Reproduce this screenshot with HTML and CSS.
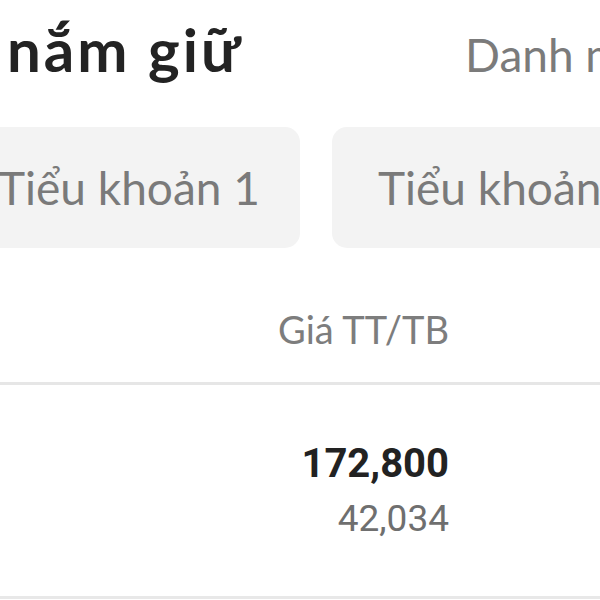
FILE: index.html
```html
<!DOCTYPE html>
<html lang="vi">
<head>
    <meta charset="UTF-8">
    <meta name="viewport" content="width=device-width, initial-scale=1.0">
    <title>Danh mục nắm giữ</title>
    <link rel="stylesheet" href="styles.css">
</head>
<body>

<div class="screen">
    <div class="top-bar">
        <h1 class="title">nắm giữ</h1>
        <span class="tab">Danh mục</span>
    </div>

    <div class="accounts">
        <div class="account">Tiểu khoản 1</div>
        <div class="account">Tiểu khoản 2</div>
    </div>

    <div class="table-head">
        <span class="price-cell">Giá TT/TB</span>
    </div>

    <div class="table-row">
        <div class="price-cell">
            <div class="price-now">172,800</div>
            <div class="price-avg">42,034</div>
        </div>
    </div>
</div>

</body>
</html>
```

FILE: styles.css
```css
body {
    margin: 0;
    background-color: #fff;
    font-family: Lato, "Open Sans", sans-serif;
    overflow: hidden;
}
.screen {
    width: 600px;
    height: 600px;
    overflow: hidden;
}
.top-bar {
    display: flex;
    align-items: baseline;
    height: 110px;
    padding-top: 13px;
    box-sizing: border-box;
    white-space: nowrap;
}
.title {
    flex: 0 0 460px;
    margin: 0;
    padding-left: 7px;
    font-size: 60px;
    font-weight: 700;
    letter-spacing: 3px;
    color: #232323;
}
.tab {
    margin-left: -2px;
    font-size: 46px;
    color: #7b7b7b;
}
.accounts {
    display: flex;
    gap: 32px;
    margin-top: 17px;
    margin-left: -48px;
    white-space: nowrap;
}
.account {
    flex: 0 0 348px;
    height: 121px;
    display: flex;
    align-items: center;
    padding-left: 46px;
    box-sizing: border-box;
    border-radius: 15px;
    background-color: #f3f3f3;
    font-size: 46px;
    color: #7a7a7a;
}
.table-head {
    display: flex;
    justify-content: flex-end;
    height: 137px;
    padding-top: 58px;
    box-sizing: border-box;
    border-bottom: 3px solid #e6e6e6;
}
.price-cell {
    padding-right: 151px;
    text-align: right;
}
.table-head .price-cell {
    font-size: 38px;
    color: #7d7d7d;
}
.table-row {
    display: flex;
    justify-content: flex-end;
    height: 214px;
    padding-top: 55px;
    box-sizing: border-box;
    border-bottom: 3px solid #e8e8e8;
    font-family: Roboto, "Liberation Sans", sans-serif;
}
.price-now {
    font-size: 40px;
    font-weight: 700;
    color: #222;
}
.price-avg {
    margin-top: 10px;
    font-size: 37px;
    color: #6f6f6f;
}
```
